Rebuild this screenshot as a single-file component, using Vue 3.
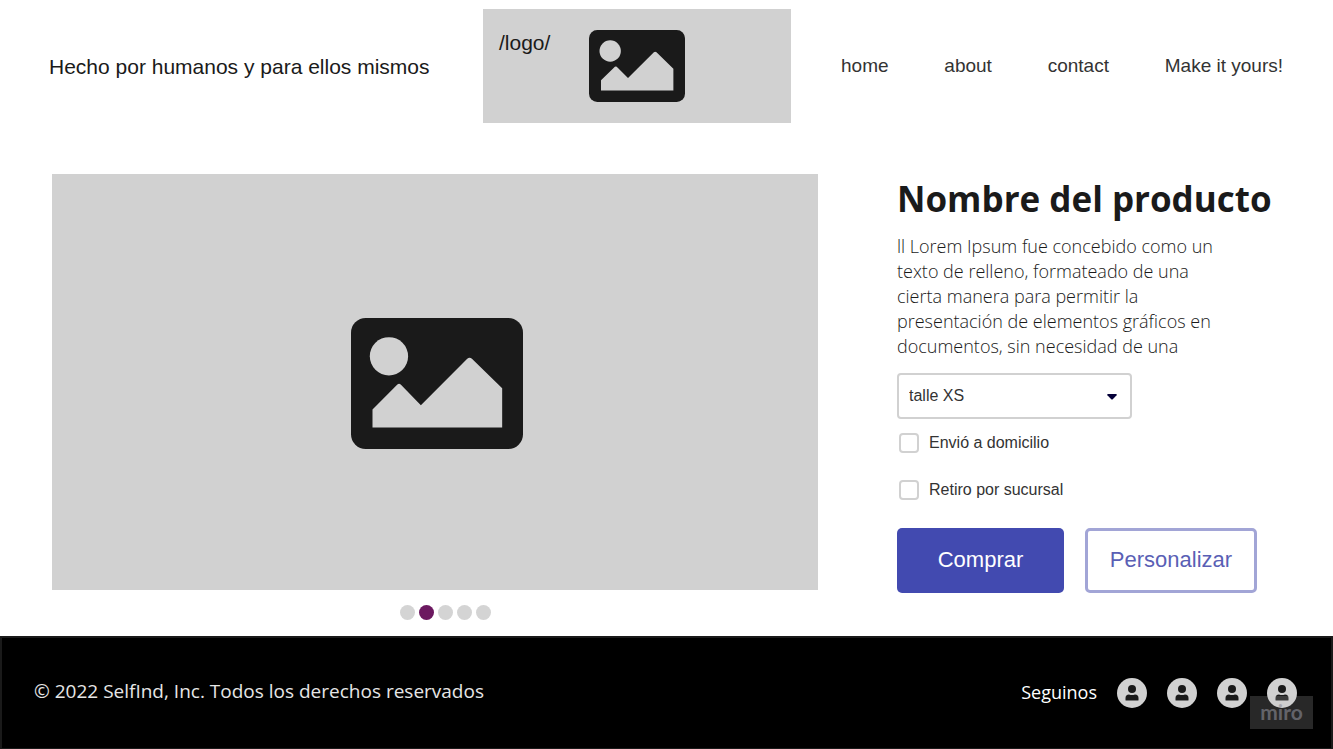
<script setup>
import { ref } from 'vue'

const links = ['home', 'about', 'contact', 'Make it yours!']
const sizes = ['talle XS', 'talle S', 'talle M', 'talle L']
const size = ref('talle XS')
const slide = ref(1)
const delivery = ref(false)
const pickup = ref(false)
</script>

<template>
  <div class="page">
    <header class="header">
      <p class="tagline">Hecho por humanos y para ellos mismos</p>
      <a class="logo" href="#">
        <span class="logo-text">/logo/</span>
        <svg class="logo-icon" viewBox="0 0 512 384" aria-hidden="true">
          <rect width="512" height="384" rx="44" fill="#1a1a1a" />
          <circle cx="113" cy="112" r="57" fill="#d1d1d1" />
          <path d="M64 268 138 196Q143 192 148 196L208 256 346 119Q353 113 360 119L450 207V322H64Z" fill="#d1d1d1" />
        </svg>
      </a>
      <nav class="nav">
        <a v-for="link in links" :key="link" href="#">{{ link }}</a>
      </nav>
    </header>

    <main class="main">
      <section class="gallery">
        <div class="photo">
          <svg class="photo-icon" viewBox="0 0 512 390" aria-hidden="true">
            <rect width="512" height="390" rx="44" fill="#1a1a1a" />
            <circle cx="113" cy="114" r="57" fill="#d1d1d1" />
            <path d="M64 272 138 198Q143 194 148 198L208 260 346 121Q353 115 360 121L450 209V326H64Z" fill="#d1d1d1" />
          </svg>
        </div>
        <div class="dots">
          <button
            v-for="n in 5"
            :key="n"
            type="button"
            class="dot"
            :class="{ active: slide === n - 1 }"
            :aria-label="'Imagen ' + n"
            @click="slide = n - 1"
          ></button>
        </div>
      </section>

      <section class="product">
        <h1>Nombre del producto</h1>
        <p class="description">
          ll Lorem Ipsum fue concebido como un texto de relleno, formateado de una cierta manera para permitir la
          presentación de elementos gráficos en documentos, sin necesidad de una
        </p>
        <div class="select-box">
          <select v-model="size" aria-label="Talle">
            <option v-for="s in sizes" :key="s">{{ s }}</option>
          </select>
          <svg class="caret" viewBox="0 0 10 6" aria-hidden="true">
            <path d="M1 0H9Q10.400 0 9.600 1.200L6 5Q5 6 4 5L.4 1.200Q-.4 0 1 0Z" fill="#050038" />
          </svg>
        </div>
        <label class="check"><input v-model="delivery" type="checkbox" />Envió a domicilio</label>
        <label class="check"><input v-model="pickup" type="checkbox" />Retiro por sucursal</label>
        <div class="actions">
          <button type="button" class="btn primary">Comprar</button>
          <button type="button" class="btn outline">Personalizar</button>
        </div>
      </section>
    </main>

    <footer class="footer">
      <p class="copyright">© 2022 SelfInd, Inc. Todos los derechos reservados</p>
      <div class="social">
        <span class="follow">Seguinos</span>
        <a v-for="n in 4" :key="n" href="#" :aria-label="'Perfil ' + n">
          <svg viewBox="0 0 30 30" aria-hidden="true">
            <circle cx="15" cy="15" r="15" fill="#d1d1d1" />
            <circle cx="15" cy="11" r="4" fill="#1a1a1a" />
            <path d="M8.500 22V20Q8.500 16.500 12 16.500Q15 17.500 18 16.500Q21.500 16.500 21.500 20V22Q21.500 22.500 21 22.500H9Q8.500 22.500 8.500 22Z" fill="#1a1a1a" />
          </svg>
        </a>
      </div>
      <span class="badge">miro</span>
    </footer>
  </div>
</template>

<style>
body {
  background: #fff;
}
</style>

<style scoped>
.page {
  display: flex;
  flex-direction: column;
  min-height: 100vh;
  font-family: "Liberation Sans", Arial, sans-serif;
  color: #1a1a1a;
}

p,
h1 {
  margin: 0;
}

a {
  color: inherit;
  text-decoration: none;
}

.header {
  display: grid;
  grid-template-columns: 384fr 308fr 442fr;
  gap: 50px;
  align-items: center;
  padding: 9px 50px 0 49px;
}

.tagline {
  padding-top: 2px;
  font-size: 21px;
  line-height: 24px;
  white-space: nowrap;
}

.logo {
  position: relative;
  display: flex;
  align-items: center;
  justify-content: center;
  height: 114px;
  background: #d1d1d1;
}

.logo-text {
  position: absolute;
  top: 22px;
  left: 16px;
  font-size: 21px;
  line-height: 24px;
}

.logo-icon {
  width: 96px;
}

.nav {
  display: flex;
  justify-content: space-between;
  font-size: 19px;
  line-height: 24px;
  color: #333;
  white-space: nowrap;
}

.main {
  display: grid;
  grid-template-columns: minmax(0, 766fr) minmax(0, 376fr);
  gap: 79px;
  padding: 51px 60px 0 52px;
}

.photo {
  display: flex;
  align-items: center;
  justify-content: center;
  box-sizing: border-box;
  height: 416px;
  padding: 4px 0 0 4px;
  background: #d1d1d1;
}

.photo-icon {
  width: 172px;
}

.dots {
  display: flex;
  justify-content: center;
  gap: 4px;
  padding: 15px 0 16px 20px;
}

.dot {
  width: 15px;
  height: 15px;
  padding: 0;
  border: 0;
  border-radius: 50%;
  background: #d4d4d4;
}

.dot.active {
  background: #6c1960;
}

h1 {
  font-family: "Open Sans", sans-serif;
  font-size: 35px;
  line-height: 50px;
  font-weight: 700;
  white-space: nowrap;
}

.description {
  max-width: 324px;
  margin-top: 10px;
  font-family: "Open Sans", sans-serif;
  font-size: 18px;
  line-height: 25px;
  font-weight: 300;
}

.select-box {
  position: relative;
  width: 235px;
  margin-top: 14px;
}

select {
  display: block;
  width: 100%;
  height: 46px;
  padding: 0 10px 2px;
  appearance: none;
  border: 2px solid #d1d1d1;
  border-radius: 4px;
  background: #fff;
  font-family: inherit;
  font-size: 16px;
  color: #333;
}

.caret {
  position: absolute;
  top: 21px;
  right: 15px;
  width: 10px;
  pointer-events: none;
}

.check {
  display: flex;
  align-items: center;
  gap: 10px;
  height: 20px;
  margin: 14px 0 27px 2px;
  font-size: 16px;
  color: #333;
}

.check + .check {
  margin-top: 0;
  margin-bottom: 28px;
}

.check input {
  width: 20px;
  height: 20px;
  margin: 0;
  appearance: none;
  border: 2px solid #d1d1d1;
  border-radius: 4px;
  background: #fff;
}

.check input:checked {
  background: #424ab0;
}

.actions {
  display: flex;
  gap: 21px;
}

.btn {
  height: 65px;
  padding: 0 0 2px;
  border-radius: 5px;
  font-family: inherit;
  font-size: 22px;
}

.primary {
  width: 167px;
  border: 0;
  background: #424ab0;
  color: #fff;
}

.outline {
  width: 172px;
  border: 3px solid #a2a5d6;
  background: #fff;
  color: #5a5fb5;
}

.footer {
  position: relative;
  display: flex;
  flex: 1;
  align-items: center;
  justify-content: space-between;
  padding: 0 34px 0 32px;
  border: 2px solid #1a1a1a;
  border-bottom-width: 1px;
  background: #000;
  font-family: "Open Sans", sans-serif;
  line-height: 26px;
}

.copyright {
  padding-bottom: 4px;
  font-size: 19px;
  color: #e6e6e6;
}

.social {
  display: flex;
  align-items: center;
  gap: 20px;
  font-size: 18px;
  color: #fff;
}

.follow {
  padding-bottom: 2px;
}

.social svg {
  display: block;
  width: 30px;
}

.badge {
  position: absolute;
  right: 18px;
  bottom: 19px;
  width: 63px;
  height: 33px;
  background: rgba(200, 200, 200, 0.2);
  color: rgba(140, 140, 150, 0.6);
  font-family: Lato, sans-serif;
  font-size: 21px;
  font-weight: 700;
  line-height: 32px;
  text-align: center;
}
</style>
